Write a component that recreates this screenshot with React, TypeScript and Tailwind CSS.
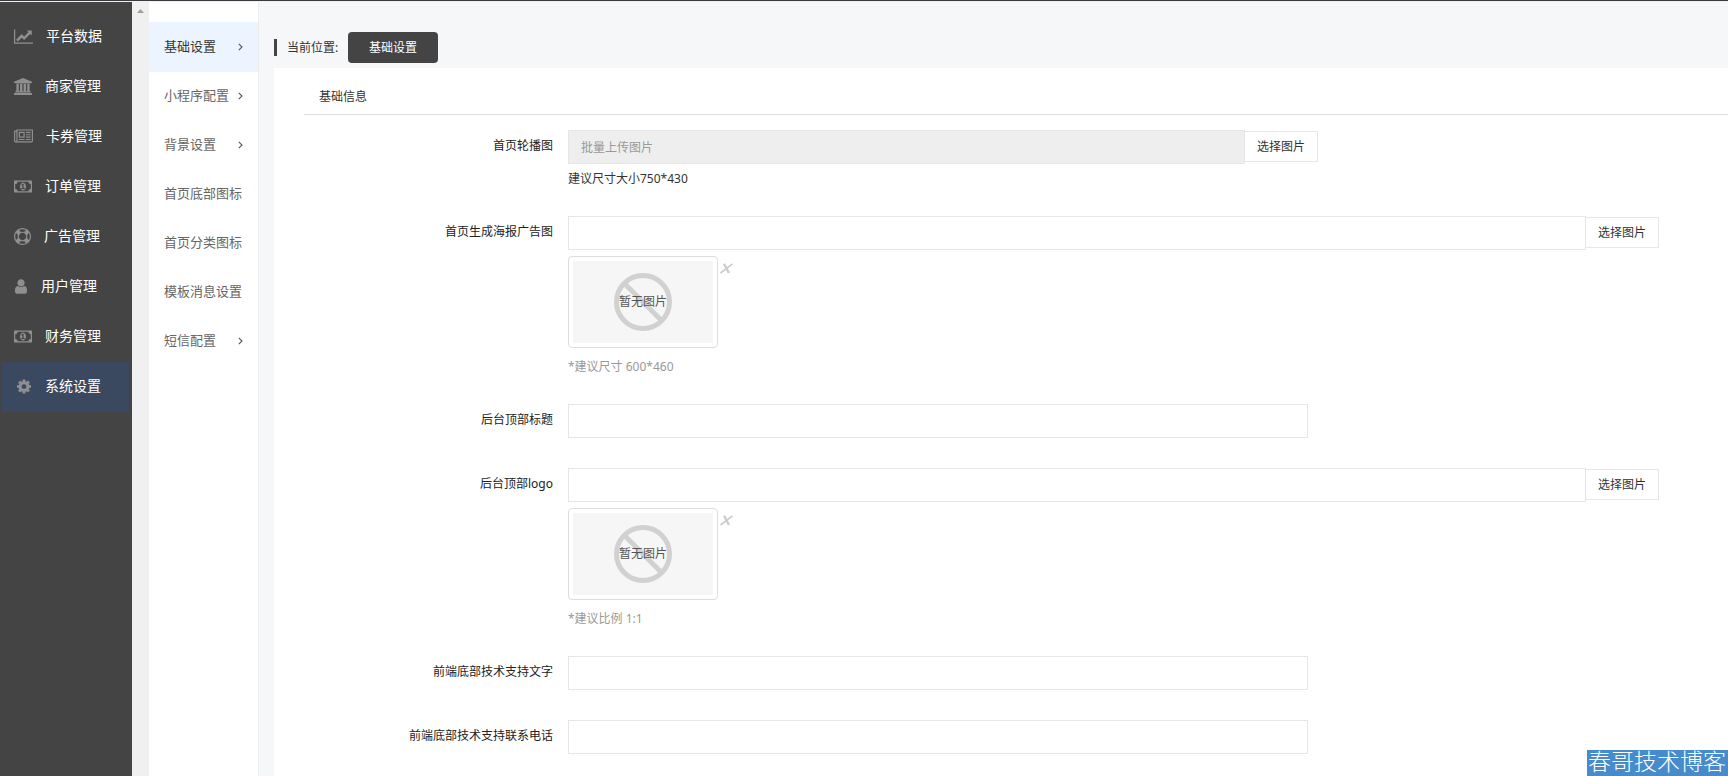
import React from "react";

interface IconProps {
	width: number;
	d: string;
	className: string;
}

interface MenuItem {
	label: string;
	icon: IconProps;
	active?: boolean;
}

interface FormRowProps {
	id: string;
	label: string;
	children: React.ReactNode;
}

interface PickerProps {
	id: string;
	placeholder?: string;
	disabled?: boolean;
	className: string;
}

const MONEY: IconProps = {
	width: 1920,
	className: "w-[18px]",
	d: "M768 1152h384v-96h-128v-448h-114l-148 137 77 80q42-37 55-57h2v288h-128v96zM1280 896q0 70-21 142t-59.5 134-101.5 101-138 39-138-39-101.5-101-59.5-134-21-142 21-142 59.5-134 101.5-101 138-39 138 39 101.5 101 59.5 134 21 142zM1792 1152v-512q-106 0-181-75t-75-181h-1152q0 106-75 181t-181 75v512q106 0 181 75t75 181h1152q0-106 75-181t181-75zM1920 320v1152q0 26-19 45t-45 19h-1792q-26 0-45-19t-19-45v-1152q0-26 19-45t45-19h1792q26 0 45 19t19 45z",
};

const menu: MenuItem[] = [
	{
		label: "平台数据",
		icon: {
			width: 2048,
			className: "w-[19px]",
			d: "M2048 1536v128h-2048v-1536h128v1408h1920zM1920 288v435q0 21-19.5 29.5t-35.5-7.5l-121-121-633 633q-10 10-23 10t-23-10l-233-233-416 416-192-192 585-585q10-10 23-10t23 10l233 233 464-464-121-121q-16-16-7.5-35.5t29.5-19.5h435q14 0 23 9t9 23z",
		},
	},
	{
		label: "商家管理",
		icon: {
			width: 1920,
			className: "w-[18px]",
			d: "M960 0l960 384v128h-128q0 26-20.5 45t-48.5 19h-1526q-28 0-48.5-19t-20.5-45h-128v-128zM256 640h256v768h128v-768h256v768h128v-768h256v768h128v-768h256v768h59q28 0 48.5 19t20.5 45v64h-1664v-64q0-26 20.5-45t48.5-19h59v-768zM1851 1600q28 0 48.5 19t20.5 45v128h-1920v-128q0-26 20.5-45t48.5-19h1782z",
		},
	},
	{
		label: "卡券管理",
		icon: {
			width: 2048,
			className: "w-[19px]",
			d: "M1024 512h-384v384h384v-384zM1152 1152v128h-640v-128h640zM1152 384v640h-640v-640h640zM1792 1152v128h-512v-128h512zM1792 896v128h-512v-128h512zM1792 640v128h-512v-128h512zM1792 384v128h-512v-128h512zM256 1344v-960h-128v960q0 26 19 45t45 19 45-19 19-45zM1920 1344v-1088h-1536v1088q0 33-11 64h1483q26 0 45-19t19-45zM2048 128v1216q0 80-56 136t-136 56h-1664q-80 0-136-56t-56-136v-1088h256v-128h1792z",
		},
	},
	{ label: "订单管理", icon: MONEY },
	{
		label: "广告管理",
		icon: {
			width: 1792,
			className: "w-[17px]",
			d: "M896 0q182 0 348 71t286 191 191 286 71 348-71 348-191 286-286 191-348 71-348-71-286-191-191-286-71-348 71-348 191-286 286-191 348-71zM896 128q-190 0-361 90l194 194q82-28 167-28t167 28l194-194q-171-90-361-90zM218 1257l194-194q-28-82-28-167t28-167l-194-194q-90 171-90 361t90 361zM896 1664q190 0 361-90l-194-194q-82 28-167 28t-167-28l-194 194q171 90 361 90zM896 1280q159 0 271.5-112.5t112.5-271.5-112.5-271.5-271.5-112.5-271.5 112.5-112.5 271.5 112.5 271.5 271.5 112.5zM1380 1063l194 194q90-171 90-361t-90-361l-194 194q28 82 28 167t-28 167z",
		},
	},
	{
		label: "用户管理",
		icon: {
			width: 1280,
			className: "w-[14px]",
			d: "M1280 1399q0 109-62.5 187t-150.5 78h-854q-88 0-150.5-78t-62.5-187q0-85 8.5-160.5t31.5-152 58.5-131 94-89 134.5-34.5q131 128 313 128t313-128q76 0 134.5 34.5t94 89 58.5 131 31.5 152 8.5 160.5zM1024 512q0 159-112.5 271.5t-271.5 112.5-271.5-112.5-112.5-271.5 112.5-271.5 271.5-112.5 271.5 112.5 112.5 271.5z",
		},
	},
	{ label: "财务管理", icon: MONEY },
	{
		label: "系统设置",
		active: true,
		icon: {
			width: 1536,
			className: "w-[14px]",
			d: "M1024 896q0-106-75-181t-181-75-181 75-75 181 75 181 181 75 181-75 75-181zM1536 787v222q0 12-8 23t-20 13l-185 28q-19 54-39 91 35 50 107 138 10 12 10 25t-9 23q-27 37-99 108t-94 71q-12 0-26-9l-138-108q-44 23-91 38-16 136-29 186-7 28-36 28h-222q-14 0-24.5-8.5t-11.5-21.5l-28-184q-49-16-90-37l-141 107q-10 9-25 9-14 0-25-11-126-114-165-168-7-10-7-23 0-12 8-23 15-21 51-66.5t54-70.5q-27-50-41-99l-183-27q-13-2-21-12.5t-8-23.5v-222q0-12 8-23t19-13l186-28q14-46 39-92-40-57-107-138-10-12-10-24 0-10 9-23 26-36 98.5-107.5t94.5-71.5q13 0 26 10l138 107q44-23 91-38 16-136 29-186 7-28 36-28h222q14 0 24.5 8.5t11.5 21.5l28 184q49 16 90 37l142-107q9-9 24-9 13 0 25 10 129 119 165 170 7 8 7 22 0 12-8 23-15 21-51 66.5t-54 70.5q26 50 41 98l183 28q13 2 21 12.5t8 23.5z",
		},
	},
];

const subMenu = [
	{ label: "基础设置", arrow: true, active: true },
	{ label: "小程序配置", arrow: true },
	{ label: "背景设置", arrow: true },
	{ label: "首页底部图标" },
	{ label: "首页分类图标" },
	{ label: "模板消息设置" },
	{ label: "短信配置", arrow: true },
];

const Icon: React.FC<IconProps> = ({ width, d, className }) => (
	<svg
		viewBox={`0 0 ${width} 1792`}
		className={`h-[17px] shrink-0 fill-[#8f8f8f] ${className}`}
		aria-hidden="true"
	>
		<path d={d} />
	</svg>
);

const Sidebar: React.FC = () => (
	<nav className="w-[132px] shrink-0 bg-[#444] px-0.5 pt-2.5">
		{menu.map(({ label, icon, active }) => (
			<a
				key={label}
				href="#"
				className={`flex h-[50px] w-[127px] items-center pb-0.5 text-sm text-white ${
					active ? "gap-[14px] bg-[#3a4860] pl-[15px]" : "gap-[13px] pl-3"
				}`}
			>
				<Icon {...icon} />
				<span>{label}</span>
			</a>
		))}
	</nav>
);

const SubMenu: React.FC = () => (
	<nav className="w-[110px] shrink-0 border-r border-[#ececec] bg-white pt-5">
		{subMenu.map(({ label, arrow, active }) => (
			<a
				key={label}
				href="#"
				className={`flex items-center justify-between px-[15px] text-[13px] whitespace-nowrap ${
					active ? "h-[50px] bg-[#ecf5ff] text-[#333]" : "h-[49px] pb-0.5 text-[#666]"
				}`}
			>
				<span>{label}</span>
				{arrow && (
					<svg
						viewBox="0 0 5 8"
						className="h-2 w-[5px] shrink-0 fill-none stroke-[#555]"
						aria-hidden="true"
					>
						<path d="M0.8 0.8L4 4L0.8 7.2" strokeWidth="1.1" />
					</svg>
				)}
			</a>
		))}
	</nav>
);

const FormRow: React.FC<FormRowProps> = ({ id, label, children }) => (
	<div className="flex">
		<label
			htmlFor={id}
			className="w-[264px] shrink-0 pt-2 pr-[15px] text-right leading-4 text-[#222]"
		>
			{label}
		</label>
		<div className="min-w-0 flex-1">{children}</div>
	</div>
);

const ImagePicker: React.FC<PickerProps> = ({ id, placeholder, disabled, className }) => (
	<div className={`flex items-start ${className}`}>
		<input
			id={id}
			type="text"
			placeholder={placeholder}
			disabled={disabled}
			className="h-[34px] min-w-0 flex-1 border border-[#e5e6e9] px-3 placeholder:text-[#999] disabled:bg-[#eee]"
		/>
		<button
			type="button"
			className="mt-px h-[31px] w-[73px] border border-l-0 border-[#e5e6e9] bg-white text-[#333]"
		>
			选择图片
		</button>
	</div>
);

const TextField: React.FC<{ id: string }> = ({ id }) => (
	<input
		id={id}
		type="text"
		className="block h-[34px] w-full max-w-[740px] border border-[#e5e6e9] px-3"
	/>
);

const EmptyThumb: React.FC = () => (
	<div className="mt-1.5 flex items-start gap-0.5">
		<div className="h-[92px] w-[150px] rounded border border-[#ddd] p-1">
			<div className="grid h-full place-items-center bg-[#f6f6f6]">
				<svg
					viewBox="0 0 58 58"
					className="col-start-1 row-start-1 size-[58px] fill-none stroke-[#d1d1d1]"
					aria-hidden="true"
				>
					<circle cx="29" cy="29" r="26.5" strokeWidth="5" />
					<path d="M11 11L47 47" strokeWidth="5" />
				</svg>
				<span className="col-start-1 row-start-1 text-[#555]">暂无图片</span>
			</div>
		</div>
		<button type="button" aria-label="删除" className="mt-[7px]">
			<svg
				viewBox="0 0 13 11"
				className="h-[11px] w-[13px] fill-none stroke-[#ccc]"
				aria-hidden="true"
			>
				<path d="M12.5 0.8L0.5 10" strokeWidth="1.7" />
				<path d="M4 0.8L9 10" strokeWidth="2.4" />
			</svg>
		</button>
	</div>
);

const App: React.FC = () => {
	return (
		<div className="flex min-h-screen flex-col bg-[#f5f7f9] font-['Noto_Sans','Noto_Sans_CJK_SC',sans-serif] text-xs text-[#333]">
			<div className="h-0.5 border-t border-[#3c3a40] bg-[#f0edf3]" />
			<div className="flex flex-1">
				<Sidebar />
				<div className="flex w-[17px] shrink-0 justify-center bg-[#f0f0f0] pt-[7px]">
					<svg viewBox="0 0 7 4" className="h-1 w-[7px] fill-[#a0a0a0]" aria-hidden="true">
						<path d="M3.5 0L7 4H0z" />
					</svg>
				</div>
				<SubMenu />

				<main className="flex min-w-0 flex-1 flex-col pl-[15px]">
					<div className="flex h-[66px] items-end pb-[5px]">
						<div className="flex h-[31px] items-center">
							<span className="h-[17px] w-[3px] bg-[#444]" />
							<span className="w-[61px] pl-2.5 whitespace-nowrap">当前位置:</span>
							<button
								type="button"
								className="ml-[10px] h-[31px] w-[90px] rounded bg-[#444] text-white"
							>
								基础设置
							</button>
						</div>
					</div>

					<section className="flex-1 bg-white pb-5 pl-[30px]">
						<h2 className="h-[47px] border-b border-[#ddd] pt-[21px] pl-[15px] leading-4">
							基础信息
						</h2>
						<form className="flex flex-col gap-[30px] pt-[15px]">
							<FormRow id="banner" label="首页轮播图">
								<ImagePicker
									id="banner"
									placeholder="批量上传图片"
									disabled
									className="max-w-[750px]"
								/>
								<p className="mt-1.5 h-4 leading-[18px]">建议尺寸大小750*430</p>
							</FormRow>
							<FormRow id="poster" label="首页生成海报广告图">
								<ImagePicker id="poster" className="max-w-[1091px]" />
								<EmptyThumb />
								<p className="mt-2.5 h-4 leading-[18px] text-[#999]">*建议尺寸 600*460</p>
							</FormRow>
							<FormRow id="title" label="后台顶部标题">
								<TextField id="title" />
							</FormRow>
							<FormRow id="logo" label="后台顶部logo">
								<ImagePicker id="logo" className="max-w-[1091px]" />
								<EmptyThumb />
								<p className="mt-2.5 h-4 leading-[18px] text-[#999]">*建议比例 1:1</p>
							</FormRow>
							<FormRow id="support" label="前端底部技术支持文字">
								<TextField id="support" />
							</FormRow>
							<FormRow id="phone" label="前端底部技术支持联系电话">
								<TextField id="phone" />
							</FormRow>
						</form>
					</section>
				</main>
			</div>

			<div className="fixed right-0 bottom-0 h-[26px] w-[141px] bg-[#468bcb] pl-px font-['KaiTi','Liberation_Serif','Noto_Sans_CJK_SC',serif] text-[23px] leading-[26px] font-light whitespace-nowrap text-white">
				春哥技术博客
			</div>
		</div>
	);
};

export default App;
